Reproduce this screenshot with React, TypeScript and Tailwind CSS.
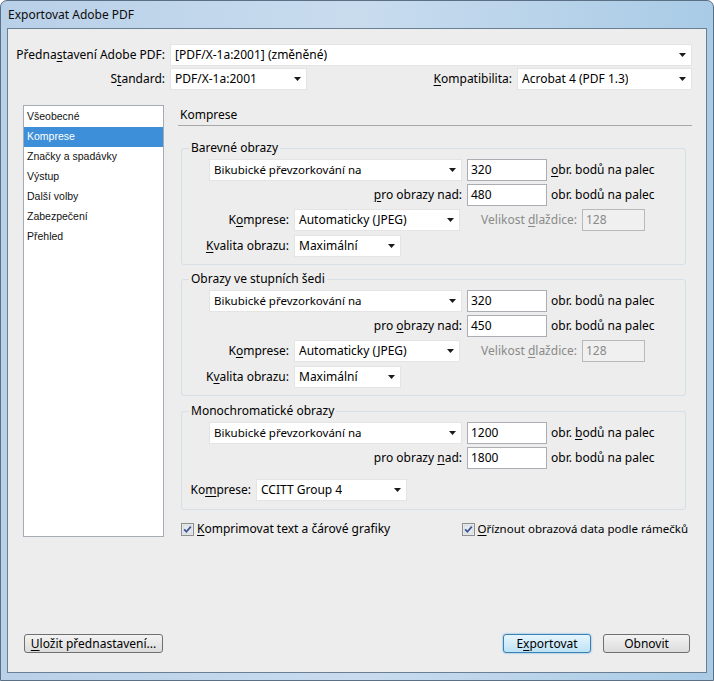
import React from 'react';

const font = { fontFamily: '"Noto Sans", "Open Sans", sans-serif' };

function U({ children }: { children: React.ReactNode }) {
  return <span className="underline underline-offset-[2px] decoration-1">{children}</span>;
}

function Arrow() {
  return (
    <svg width="7" height="4" viewBox="0 0 7 4" className="shrink-0">
      <polygon points="0,0 7,0 3.5,4" fill="#1a1a1a" />
    </svg>
  );
}

function Select({ value, className }: { value: string; className: string }) {
  return (
    <div
      className={`h-[22px] bg-white border border-[#e4e4e4] flex items-center justify-between pl-[4px] pr-[5px] shrink-0 ${className}`}
    >
      <span className="truncate">{value}</span>
      <Arrow />
    </div>
  );
}

function Input({ value, disabled }: { value: string; disabled?: boolean }) {
  return (
    <div
      className={`h-[22px] flex items-center pl-[3px] shrink-0 border ${
        disabled ? 'w-[63px] bg-[#f0f0f0] border-[#b9b9b9] text-[#8a8a8a]' : 'w-[80px] bg-white border-[#abadb3]'
      }`}
    >
      {value}
    </div>
  );
}

function Check() {
  return (
    <svg width="13" height="13" viewBox="0 0 13 13" className="shrink-0">
      <rect x="0.5" y="0.5" width="12" height="12" fill="#f4f4f4" stroke="#8e8f8f" />
      <rect x="2" y="2" width="9" height="9" fill="#e6eaee" stroke="#c3c9d0" strokeWidth="0.6" />
      <path d="M3.2 6.4 L5.4 8.8 L9.8 3.6" fill="none" stroke="#3a5394" strokeWidth="1.7" />
    </svg>
  );
}

interface GroupProps {
  title: string;
  mono?: boolean;
  row1: React.ReactNode;
  row2: React.ReactNode;
  row2Value: string;
  res: string;
  down: string;
  kompLabel: React.ReactNode;
  kvalLabel?: React.ReactNode;
  className: string;
}

function Group({ title, mono, row1, row2, row2Value, res, down, kompLabel, kvalLabel, className }: GroupProps) {
  return (
    <fieldset className={`border border-[#d5dfe5] rounded-[3px] ml-[3px] mr-[6px] px-0 ${className}`}>
      <legend className="ml-[7px] px-[2px] leading-[16px]">{title}</legend>
      <div className="flex flex-col gap-[3px] pt-[3px]">
        <div className="flex items-center h-[22px]">
          <div className="w-[27px] shrink-0" />
          <Select value="Bikubické převzorkování na" className="w-[253px] text-[11.5px]" />
          <div className="w-[5px] shrink-0" />
          <Input value={res} />
          <div className="pl-[4px]">{row1}</div>
        </div>
        <div className="flex items-center h-[22px]">
          <div className="w-[285px] shrink-0 text-right pr-[5px]">{row2}</div>
          <Input value={down} />
          <div className="pl-[4px]">{row2Value}</div>
        </div>
        {mono ? (
          <div className="flex items-center h-[22px] mt-[7px]">
            <div className="w-[74px] shrink-0 text-right pr-[5px]">{kompLabel}</div>
            <Select value="CCITT Group 4" className="w-[151px]" />
          </div>
        ) : (
          <>
            <div className="flex items-center h-[22px]">
              <div className="w-[112px] shrink-0 text-right pr-[5px]">{kompLabel}</div>
              <Select value="Automaticky (JPEG)" className="w-[166px]" />
              <div className="w-[122px] shrink-0 text-right pr-[5px] text-[#8a8a8a]">
                Velikost <U>d</U>laždice:
              </div>
              <Input value="128" disabled />
            </div>
            <div className="flex items-center h-[22px] mt-[1px]">
              <div className="w-[112px] shrink-0 text-right pr-[5px]">{kvalLabel}</div>
              <Select value="Maximální" className="w-[107px]" />
            </div>
          </>
        )}
      </div>
    </fieldset>
  );
}

export default function App() {
  const items = ['Všeobecné', 'Komprese', 'Značky a spadávky', 'Výstup', 'Další volby', 'Zabezpečení', 'Přehled'];

  return (
    <div
      className="w-[714px] h-[681px] flex flex-col text-[12px] text-black rounded-t-[7px] border border-[#5b7085] bg-gradient-to-r from-[#b8d0e8] via-[#c9dcee] to-[#a9cbe6]"
      style={font}
    >
      {/* Title bar */}
      <div className="h-[27px] flex items-center pl-[7px] text-[12px] text-[#0c0c0c]">Exportovat Adobe PDF</div>

      {/* Client area */}
      <div className="flex-1 mx-[6px] mb-[7px] border border-[#6a7f94] bg-[#ededed] flex flex-col pl-[15px] pr-[14px]">
        {/* Presets */}
        <div className="flex items-center h-[22px] mt-[15px]">
          <div className="w-[147px] shrink-0 text-right pr-[5px] whitespace-nowrap flex justify-end">
            <span>
              Předna<U>s</U>tavení Adobe PDF:
            </span>
          </div>
          <Select value="[PDF/X-1a:2001] (změněné)" className="flex-1" />
        </div>
        <div className="flex items-center h-[22px] mt-[2px]">
          <div className="w-[147px] shrink-0 text-right pr-[5px]">
            S<U>t</U>andard:
          </div>
          <Select value="PDF/X-1a:2001" className="w-[137px]" />
          <div className="flex-1 text-right pr-[5px]">
            <U>K</U>ompatibilita:
          </div>
          <Select value="Acrobat 4 (PDF 1.3)" className="w-[175px]" />
        </div>

        {/* Main */}
        <div className="flex mt-[15px]">
          <div
            className="w-[141px] h-[432px] shrink-0 bg-white border border-[#a5acb5] py-[1px] text-[10.5px]"
            style={{ fontFamily: '"Liberation Sans", Arial, sans-serif' }}
          >
            {items.map((it) => (
              <div
                key={it}
                className={`h-[20px] flex items-center pl-[3px] ${
                  it === 'Komprese' ? 'bg-[#3d8fd9] text-white' : 'text-[#111]'
                }`}
              >
                {it}
              </div>
            ))}
          </div>

          <div className="flex-1 ml-[14px] flex flex-col">
            <div className="h-[21px] border-b border-[#a8a8a8] pl-[2px] flex items-center">Komprese</div>

            <Group
              className="mt-[14px] pb-[7px]"
              title="Barevné obrazy"
              row1={
                <>
                  <U>o</U>br. bodů na palec
                </>
              }
              row2={
                <>
                  <U>p</U>ro obrazy nad:
                </>
              }
              row2Value="obr. bodů na palec"
              res="320"
              down="480"
              kompLabel={
                <>
                  K<U>o</U>mprese:
                </>
              }
              kvalLabel={
                <>
                  <U>K</U>valita obrazu:
                </>
              }
            />

            <Group
              className="mt-[6px] pb-[7px]"
              title="Obrazy ve stupních šedi"
              row1={<>obr. bodů na palec</>}
              row2={
                <>
                  pro <U>o</U>brazy nad:
                </>
              }
              row2Value="obr. bodů na palec"
              res="320"
              down="450"
              kompLabel={
                <>
                  K<U>o</U>mprese:
                </>
              }
              kvalLabel={
                <>
                  K<U>v</U>alita obrazu:
                </>
              }
            />

            <Group
              className="mt-[7px] pb-[8px]"
              mono
              title="Monochromatické obrazy"
              row1={
                <>
                  obr. <U>b</U>odů na palec
                </>
              }
              row2={
                <>
                  pro obrazy <U>n</U>ad:
                </>
              }
              row2Value="obr. bodů na palec"
              res="1200"
              down="1800"
              kompLabel={
                <>
                  Ko<U>m</U>prese:
                </>
              }
            />

            <div className="flex items-center justify-between mt-[10px] ml-[3px]">
              <div className="flex items-center gap-[3px]">
                <Check />
                <span>
                  <U>K</U>omprimovat text a čárové grafiky
                </span>
              </div>
              <div className="flex items-center gap-[3px] mr-[4px] text-[11.5px]">
                <Check />
                <span>
                  <U>O</U>říznout obrazová data podle rámečků
                </span>
              </div>
            </div>
          </div>
        </div>

        <div className="flex-1" />

        {/* Buttons */}
        <div className="flex items-center mb-[19px]">
          <button className="ml-[1px] w-[139px] h-[19px] rounded-[3px] border border-[#707070] bg-gradient-to-b from-[#f3f3f3] to-[#dcdcdc] flex items-center justify-center">
            <span>
              <U>U</U>ložit přednastavení...
            </span>
          </button>
          <div className="flex-1" />
          <button className="w-[88px] h-[19px] rounded-[3px] border border-[#3c7fb1] bg-gradient-to-b from-[#e6f5fd] to-[#bde3f6] shadow-[0_0_2px_#49a9e0] flex items-center justify-center">
            <span>
              E<U>x</U>portovat
            </span>
          </button>
          <button className="ml-[12px] mr-[2px] w-[87px] h-[19px] rounded-[3px] border border-[#707070] bg-gradient-to-b from-[#f3f3f3] to-[#dcdcdc] flex items-center justify-center">
            Obnovit
          </button>
        </div>
      </div>
    </div>
  );
}
